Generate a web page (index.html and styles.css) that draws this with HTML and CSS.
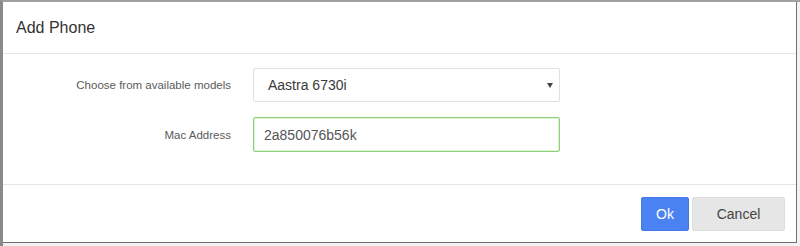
FILE: index.html
```html
<!DOCTYPE html>
<html>
<head>
<meta charset="utf-8">
<link rel="stylesheet" href="styles.css">
</head>
<body>
<div class="page">
  <div class="modal">
    <div class="modal-header">
      <h4 class="modal-title">Add Phone</h4>
    </div>
    <div class="modal-body">
      <div class="form-row">
        <label class="form-label">Choose from available models</label>
        <div class="select">
          <span class="select-value">Aastra 6730i</span>
          <span class="select-arrow"></span>
        </div>
      </div>
      <div class="form-row">
        <label class="form-label">Mac Address</label>
        <div class="mac-field">2a850076b56k</div>
      </div>
    </div>
    <div class="modal-footer">
      <button class="btn btn-primary">Ok</button>
      <button class="btn btn-default">Cancel</button>
    </div>
  </div>
</div>
</body>
</html>
```
FILE: styles.css
```css
html, body {
  margin: 0;
  padding: 0;
  background: #f2f2f2;
  font-family: "Liberation Sans", Arial, sans-serif;
}
.page {
  width: 800px;
  height: 246px;
  box-sizing: border-box;
  border-left: 3px solid #8a8a8a;
  border-top: 2px solid #a0a0a0;
}
.modal {
  width: 794px;
  height: 241px;
  box-sizing: border-box;
  background: #fff;
  border-right: 1px solid #6f6f6f;
  border-bottom: 1px solid #6f6f6f;
  display: flex;
  flex-direction: column;
}
.modal-header {
  height: 52px;
  box-sizing: border-box;
  padding: 0 13px;
  display: flex;
  align-items: center;
  border-bottom: 1px solid #e5e5e5;
}
.modal-title {
  margin: 0;
  font-size: 16px;
  font-weight: normal;
  color: #333;
}
.modal-body {
  height: 130px;
  box-sizing: border-box;
  padding-top: 14px;
  display: flex;
  flex-direction: column;
  gap: 15px;
}
.form-row {
  display: grid;
  grid-template-columns: 228px 307px;
  column-gap: 22px;
  align-items: center;
}
.form-label {
  text-align: right;
  font-size: 11.5px;
  color: #5a5a5a;
}
.select {
  height: 34px;
  box-sizing: border-box;
  border: 1px solid #e0e0e0;
  border-radius: 2px;
  display: flex;
  align-items: center;
  justify-content: space-between;
  padding: 0 6px 0 14px;
  font-size: 14px;
  color: #3a3a3a;
}
.select-arrow {
  width: 0;
  height: 0;
  border-left: 3px solid transparent;
  border-right: 3px solid transparent;
  border-top: 5px solid #444;
}
.mac-field {
  height: 35px;
  box-sizing: border-box;
  border: 1px solid #8dd078;
  box-shadow: inset 0 0 0 1px rgba(150, 215, 130, 0.3);
  border-radius: 2px;
  display: flex;
  align-items: center;
  padding: 0 10px;
  font-size: 14px;
  color: #555;
}
.modal-footer {
  flex: 1;
  border-top: 1px solid #e5e5e5;
  display: flex;
  justify-content: flex-end;
  align-items: flex-start;
  padding: 12px 11px 0 0;
  gap: 3px;
}
.btn {
  height: 34px;
  box-sizing: border-box;
  font-family: "Liberation Sans", Arial, sans-serif;
  font-size: 14px;
  border-radius: 2px;
  border: 1px solid transparent;
  padding: 0;
}
.btn-primary {
  width: 48px;
  background: #4b82f1;
  border-color: #4479e8;
  color: #fff;
}
.btn-default {
  width: 93px;
  background: #e6e6e6;
  border-color: #dedede;
  color: #444;
}
```
